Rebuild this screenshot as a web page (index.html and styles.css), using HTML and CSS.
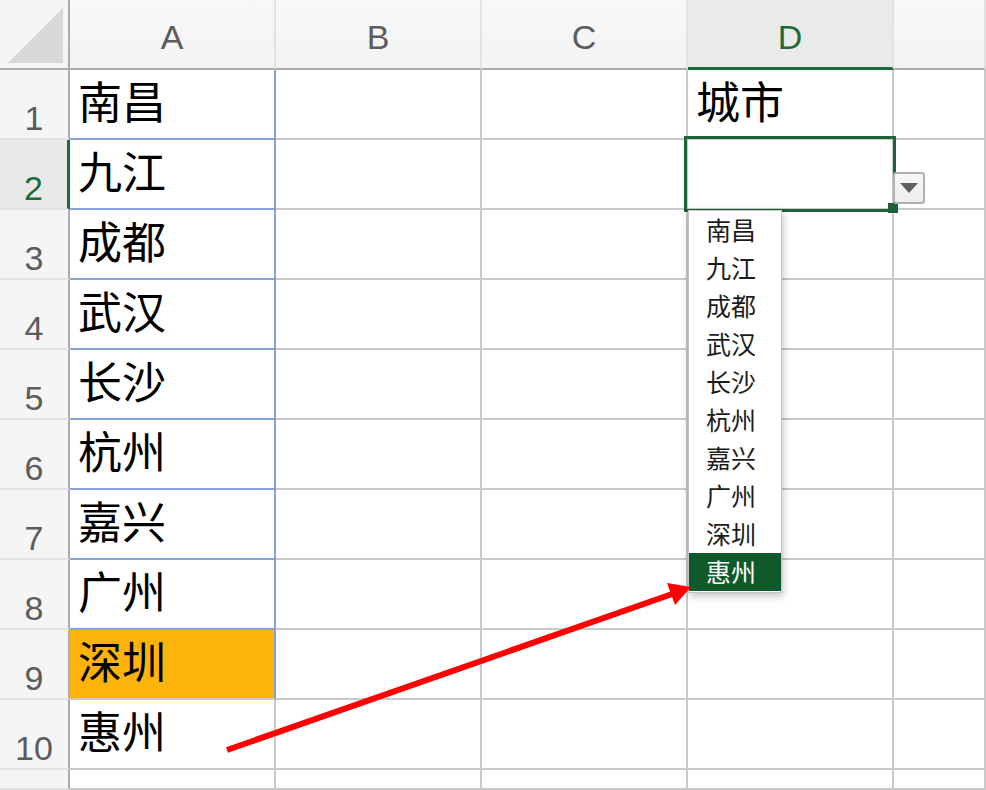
FILE: index.html
```html
<!DOCTYPE html>
<html lang="zh-CN">
<head>
    <meta charset="UTF-8">
    <title>数据验证下拉列表</title>
    <link rel="stylesheet" href="styles.css">
</head>
<body>
    <div class="sheet">
        <!-- column headers -->
        <div class="corner"><span class="corner-tri"></span></div>
        <div class="col-head">A</div>
        <div class="col-head">B</div>
        <div class="col-head">C</div>
        <div class="col-head active">D</div>
        <div class="col-head"></div>

        <!-- rows -->
        <div class="row-head">1</div>
        <div class="cell list-src">南昌</div><div class="cell"></div><div class="cell"></div><div class="cell">城市</div><div class="cell"></div>

        <div class="row-head active">2</div>
        <div class="cell list-src">九江</div><div class="cell"></div><div class="cell"></div><div class="cell"></div><div class="cell"></div>

        <div class="row-head">3</div>
        <div class="cell list-src">成都</div><div class="cell"></div><div class="cell"></div><div class="cell"></div><div class="cell"></div>

        <div class="row-head">4</div>
        <div class="cell list-src">武汉</div><div class="cell"></div><div class="cell"></div><div class="cell"></div><div class="cell"></div>

        <div class="row-head">5</div>
        <div class="cell list-src">长沙</div><div class="cell"></div><div class="cell"></div><div class="cell"></div><div class="cell"></div>

        <div class="row-head">6</div>
        <div class="cell list-src">杭州</div><div class="cell"></div><div class="cell"></div><div class="cell"></div><div class="cell"></div>

        <div class="row-head">7</div>
        <div class="cell list-src">嘉兴</div><div class="cell"></div><div class="cell"></div><div class="cell"></div><div class="cell"></div>

        <div class="row-head">8</div>
        <div class="cell list-src">广州</div><div class="cell"></div><div class="cell"></div><div class="cell"></div><div class="cell"></div>

        <div class="row-head">9</div>
        <div class="cell list-src last fill-orange">深圳</div><div class="cell"></div><div class="cell"></div><div class="cell"></div><div class="cell"></div>

        <div class="row-head">10</div>
        <div class="cell">惠州</div><div class="cell"></div><div class="cell"></div><div class="cell"></div><div class="cell"></div>

        <div class="row-head"></div>
        <div class="cell"></div><div class="cell"></div><div class="cell"></div><div class="cell"></div><div class="cell"></div>

        <!-- selected cell D2 with validation dropdown -->
        <div class="selection"></div>
        <div class="fill-handle"></div>
        <div class="dd-button">
            <svg width="18" height="10" viewBox="0 0 18 10"><polygon points="0,0 18,0 9,10" fill="#5f5f5f"/></svg>
        </div>
        <ul class="dd-list">
            <li>南昌</li>
            <li>九江</li>
            <li>成都</li>
            <li>武汉</li>
            <li>长沙</li>
            <li>杭州</li>
            <li>嘉兴</li>
            <li>广州</li>
            <li>深圳</li>
            <li class="picked">惠州</li>
        </ul>

        <!-- annotation arrow -->
        <svg class="arrow" width="986" height="790" viewBox="0 0 986 790">
            <line x1="227" y1="750" x2="675" y2="593" stroke="#ff0000" stroke-width="6"/>
            <polygon points="691,587 675,605 667,583" fill="#ff0000"/>
        </svg>
    </div>
</body>
</html>
```

FILE: styles.css
```css
html, body {
    margin: 0;
    padding: 0;
    background: white;
}
.sheet {
    position: relative;
    width: 986px;
    height: 790px;
    overflow: hidden;
    display: grid;
    grid-template-columns: 70px 206px 206px 206px 206px 92px;
    grid-template-rows: 70px repeat(10, 70px) 20px;
    font-family: "Liberation Sans", Arial, sans-serif;
}
.corner {
    position: relative;
    box-sizing: border-box;
    background: #f5f5f5;
    border-right: 2px solid #ababab;
    border-bottom: 2px solid #ababab;
}
.corner-tri {
    position: absolute;
    left: 8px;
    top: 8px;
    width: 55px;
    height: 55px;
    background: #d8d8d8;
    clip-path: polygon(100% 0, 100% 100%, 0 100%);
}
.col-head {
    box-sizing: border-box;
    background: linear-gradient(#f8f8f8, #f3f3f3);
    border-right: 2px solid #e2e2e2;
    border-bottom: 2px solid #ababab;
    color: #5c5c5c;
    font-size: 34px;
    line-height: 34px;
    text-align: center;
    padding-top: 20px;
}
.col-head.active {
    background: #eaeaea;
    color: #1e6b3a;
    border-bottom: 3px solid #1e6b3a;
}
.row-head {
    box-sizing: border-box;
    background: #f5f5f5;
    border-right: 2px solid #ababab;
    border-bottom: 2px solid #e2e2e2;
    color: #5c5c5c;
    font-size: 34px;
    line-height: 34px;
    display: flex;
    align-items: flex-end;
    justify-content: center;
    padding-bottom: 3px;
}
.row-head.active {
    background: #e9e9e9;
    color: #1e6b3a;
    border-right: 3px solid #1e6b3a;
}
.cell {
    box-sizing: border-box;
    border-right: 2px solid #c9c9c9;
    border-bottom: 2px solid #c9c9c9;
    font-family: "Noto Sans CJK SC", sans-serif;
    font-size: 44px;
    line-height: 44px;
    color: #000;
    padding: 8px 0 0 8px;
    white-space: nowrap;
}
.cell.list-src {
    border-right-color: #86a0d9;
    border-bottom-color: #86a0d9;
}
.cell.list-src.last {
    border-bottom-color: #c9c9c9;
}
.fill-orange {
    background: #fcb40c;
}
.selection {
    position: absolute;
    left: 684px;
    top: 136px;
    width: 212px;
    height: 76px;
    box-sizing: border-box;
    border: 3px solid #1e6337;
}
.fill-handle {
    position: absolute;
    left: 888px;
    top: 203px;
    width: 10px;
    height: 10px;
    background: #1e5e35;
}
.dd-button {
    position: absolute;
    left: 893px;
    top: 172px;
    width: 32px;
    height: 32px;
    box-sizing: border-box;
    border: 2px solid #b0b0b0;
    border-radius: 3px;
    background: linear-gradient(#f7f7f7, #ececec);
    display: flex;
    align-items: center;
    justify-content: center;
}
.dd-list {
    position: absolute;
    left: 688px;
    top: 210px;
    width: 94px;
    margin: 0;
    padding: 0 0 1px;
    list-style: none;
    box-sizing: border-box;
    background: white;
    border: 1px solid #c4c4c4;
    box-shadow: 1px 3px 8px rgba(0, 0, 0, 0.25);
}
.dd-list li {
    height: 38px;
    line-height: 36px;
    padding-left: 17px;
    font-family: "Noto Sans CJK SC", sans-serif;
    font-size: 25px;
    color: #1c1c1c;
}
.dd-list li.picked {
    background: #0f5a2b;
    color: white;
}
.arrow {
    position: absolute;
    left: 0;
    top: 0;
    pointer-events: none;
}
```
